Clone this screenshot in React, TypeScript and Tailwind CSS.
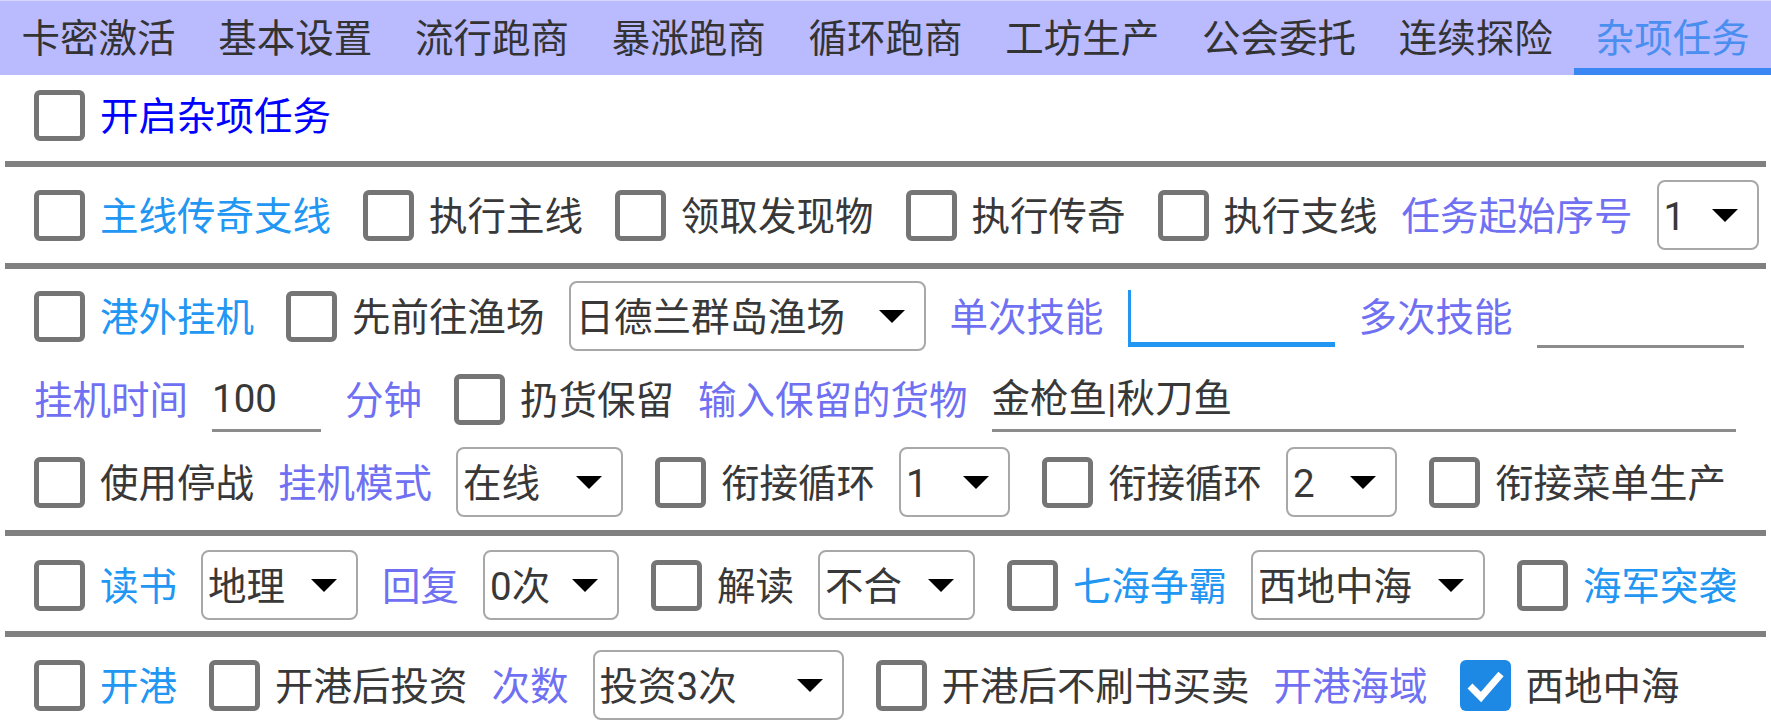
import React from "react";

const DARK = "text-[#383838]";
const AZURE = "text-[#2196f3]";
const PURPLE = "text-[#7070f2]";
const BLUE = "text-[#0000ff]";

function Box({ checked }: { checked?: boolean }) {
  if (checked) {
    return (
      <span className="w-[51px] h-[51px] rounded-[6px] bg-[#1e88e5] flex items-center justify-center shrink-0">
        <svg width="51" height="51" viewBox="0 0 51 51">
          <polyline points="10,26 21,37 41,14" fill="none" stroke="#ffffff" strokeWidth="7" />
        </svg>
      </span>
    );
  }
  return <span className="block w-[51px] h-[51px] rounded-[6px] border-[5.5px] border-solid border-[#757575] shrink-0" />;
}

function Check({ label, color, checked }: { label: string; color: string; checked?: boolean }) {
  return (
    <div className="flex items-center gap-[15px] pl-[8px] shrink-0">
      <Box checked={checked} />
      <span className={`${color} whitespace-nowrap pt-[4px]`}>{label}</span>
    </div>
  );
}

function Label({ text, color }: { text: string; color: string }) {
  return <span className={`${color} whitespace-nowrap shrink-0 pt-[4px]`}>{text}</span>;
}

function Select({ value, w }: { value: string; w: string }) {
  return (
    <div className={`flex items-center h-[70px] border-[2px] border-solid border-[#a8a8a8] rounded-[8px] pl-[5px] pr-[19px] shrink-0 ${w}`}>
      <span className="text-[#383838] whitespace-nowrap pt-[4px]">{value}</span>
      <svg className="ml-auto shrink-0" width="26" height="13" viewBox="0 0 26 13">
        <polygon points="0,0 26,0 13,13" fill="#000000" />
      </svg>
    </div>
  );
}

function Sep() {
  return <div className="h-[6px] mx-[5px] bg-[#808080]" />;
}

const tabs = ["卡密激活", "基本设置", "流行跑商", "暴涨跑商", "循环跑商", "工坊生产", "公会委托", "连续探险", "杂项任务"];

export default function App() {
  return (
    <div className="w-[1771px] h-[721px] bg-white overflow-hidden font-['Roboto','Noto_Sans_CJK_SC',sans-serif] text-[38.5px] leading-none">
      {/* Tab bar */}
      <div className="flex h-[75px] bg-[#babaff] shadow-[inset_0_1px_0_#d6d6ff]">
        {tabs.map((t, i) => {
          const active = i === tabs.length - 1;
          return (
            <div key={t} className="flex-1 relative flex items-center justify-center">
              <span className={`pt-[4px] ${active ? "text-[#4a8ef0]" : "text-[#333333]"}`}>{t}</span>
              {active && <div className="absolute left-0 right-0 bottom-0 h-[7px] bg-[#3a86f2]" />}
            </div>
          );
        })}
      </div>

      {/* Section 1 */}
      <div className="pt-[5px] pb-[11px]">
        <div className="flex items-center h-[70px] pl-[26px] gap-[24px]">
          <Check label="开启杂项任务" color={BLUE} />
        </div>
      </div>
      <Sep />

      {/* Section 2 */}
      <div className="pt-[13px] pb-[13px]">
        <div className="flex items-center h-[70px] pl-[26px] gap-[24px]">
          <Check label="主线传奇支线" color={AZURE} />
          <Check label="执行主线" color={DARK} />
          <Check label="领取发现物" color={DARK} />
          <Check label="执行传奇" color={DARK} />
          <Check label="执行支线" color={DARK} />
          <Label text="任务起始序号" color={PURPLE} />
          <Select value="1" w="w-[102px]" />
        </div>
      </div>
      <Sep />

      {/* Section 3 */}
      <div className="pt-[12px] pb-[13px] flex flex-col gap-[13px]">
        <div className="flex items-center h-[70px] pl-[26px] gap-[24px]">
          <Check label="港外挂机" color={AZURE} />
          <Check label="先前往渔场" color={DARK} />
          <Select value="日德兰群岛渔场" w="w-[357px]" />
          <Label text="单次技能" color={PURPLE} />
          <div className="w-[207px] h-[62px] border-b-[5px] border-solid border-[#2196f3] flex items-end shrink-0">
            <span className="block w-[3px] h-[52px] bg-[#2196f3]" />
          </div>
          <Label text="多次技能" color={PURPLE} />
          <div className="w-[207px] h-[64px] border-b-[3px] border-solid border-[#8c8c8c] shrink-0" />
        </div>
        <div className="flex items-center h-[70px] pl-[34px] gap-[24px]">
          <Label text="挂机时间" color={PURPLE} />
          <div className="w-[109px] h-[66px] border-b-[3px] border-solid border-[#8c8c8c] flex items-center shrink-0">
            <span className="text-[#383838] pt-[4px]">100</span>
          </div>
          <Label text="分钟" color={PURPLE} />
          <Check label="扔货保留" color={DARK} />
          <Label text="输入保留的货物" color={PURPLE} />
          <div className="w-[744px] h-[66px] border-b-[3px] border-solid border-[#8c8c8c] flex items-center shrink-0">
            <span className="text-[#383838] whitespace-nowrap pt-[4px]">金枪鱼|秋刀鱼</span>
          </div>
        </div>
        <div className="flex items-center h-[70px] pl-[26px] gap-[24px]">
          <Check label="使用停战" color={DARK} />
          <Label text="挂机模式" color={PURPLE} />
          <Select value="在线" w="w-[167px]" />
          <Check label="衔接循环" color={DARK} />
          <Select value="1" w="w-[111px]" />
          <Check label="衔接循环" color={DARK} />
          <Select value="2" w="w-[111px]" />
          <Check label="衔接菜单生产" color={DARK} />
        </div>
      </div>
      <Sep />

      {/* Section 4 */}
      <div className="pt-[14px] pb-[11px]">
        <div className="flex items-center h-[70px] pl-[26px] gap-[24px]">
          <Check label="读书" color={AZURE} />
          <Select value="地理" w="w-[157px]" />
          <Label text="回复" color={PURPLE} />
          <Select value="0次" w="w-[136px]" />
          <Check label="解读" color={DARK} />
          <Select value="不合" w="w-[157px]" />
          <Check label="七海争霸" color={AZURE} />
          <Select value="西地中海" w="w-[234px]" />
          <Check label="海军突袭" color={AZURE} />
        </div>
      </div>
      <Sep />

      {/* Section 5 */}
      <div className="pt-[13px]">
        <div className="flex items-center h-[70px] pl-[26px] gap-[24px]">
          <Check label="开港" color={AZURE} />
          <Check label="开港后投资" color={DARK} />
          <Label text="次数" color={PURPLE} />
          <Select value="投资3次" w="w-[251px]" />
          <Check label="开港后不刷书买卖" color={DARK} />
          <Label text="开港海域" color={PURPLE} />
          <Check label="西地中海" color={DARK} checked />
        </div>
      </div>
    </div>
  );
}
